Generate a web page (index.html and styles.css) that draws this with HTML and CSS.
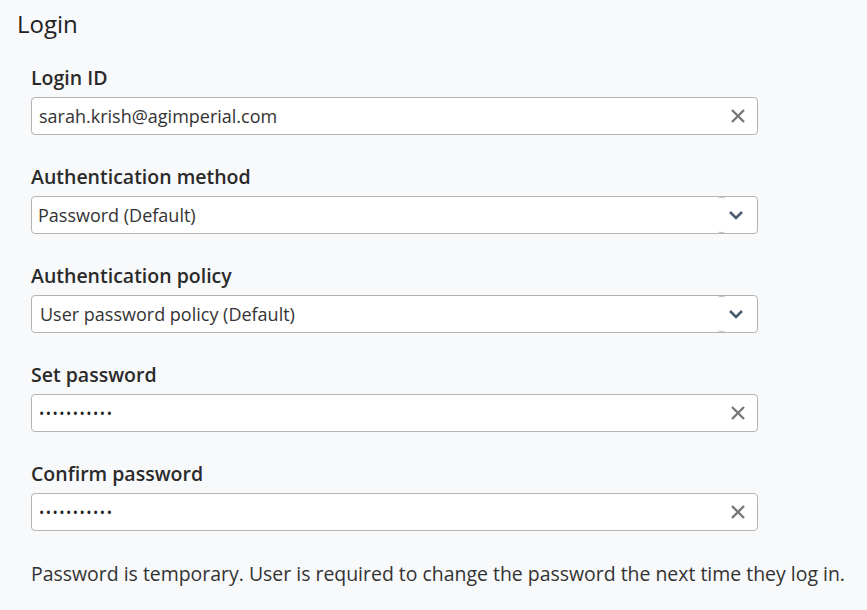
FILE: index.html
```html
<!DOCTYPE html>
<html lang="en">
<head>
    <meta charset="UTF-8">
    <meta name="viewport" content="width=device-width, initial-scale=1.0">
    <title>Login</title>
    <link rel="stylesheet" href="styles.css">
</head>
<body>
    <div class="page">
        <h1>Login</h1>

        <form class="login-form">
            <div class="field">
                <label for="login_id">Login ID</label>
                <div class="control">
                    <input type="text" id="login_id" value="sarah.krish@agimperial.com">
                    <span class="icon clear">
                        <svg width="16" height="16" viewBox="0 0 16 16"><path d="M2 2 L14 14 M14 2 L2 14" stroke="#777" stroke-width="2.4" fill="none"/></svg>
                    </span>
                </div>
            </div>

            <div class="field">
                <label for="auth_method">Authentication method</label>
                <div class="control select">
                    <span class="value" id="auth_method">Password (Default)</span>
                    <span class="divider"></span>
                    <span class="icon chevron">
                        <svg width="16" height="10" viewBox="0 0 16 10"><path d="M2 2 L8 8 L14 2" stroke="#4a5a6e" stroke-width="2.5" fill="none"/></svg>
                    </span>
                </div>
            </div>

            <div class="field">
                <label for="auth_policy">Authentication policy</label>
                <div class="control select">
                    <span class="value policy" id="auth_policy">User password policy (Default)</span>
                    <span class="divider"></span>
                    <span class="icon chevron">
                        <svg width="16" height="10" viewBox="0 0 16 10"><path d="M2 2 L8 8 L14 2" stroke="#4a5a6e" stroke-width="2.5" fill="none"/></svg>
                    </span>
                </div>
            </div>

            <div class="field">
                <label for="set_password">Set password</label>
                <div class="control">
                    <input type="password" id="set_password" value="Temporary01">
                    <span class="icon clear">
                        <svg width="16" height="16" viewBox="0 0 16 16"><path d="M2 2 L14 14 M14 2 L2 14" stroke="#777" stroke-width="2.4" fill="none"/></svg>
                    </span>
                </div>
            </div>

            <div class="field">
                <label for="confirm_password">Confirm password</label>
                <div class="control">
                    <input type="password" id="confirm_password" value="Temporary01">
                    <span class="icon clear">
                        <svg width="16" height="16" viewBox="0 0 16 16"><path d="M2 2 L14 14 M14 2 L2 14" stroke="#777" stroke-width="2.4" fill="none"/></svg>
                    </span>
                </div>
            </div>

            <p class="note">Password is temporary. User is required to change the password the next time they log in.</p>
        </form>
    </div>
</body>
</html>
```

FILE: styles.css
```css
body {
    font-family: 'Open Sans', sans-serif;
    background-color: #f8f9fb;
    color: #333;
    margin: 0;
    padding: 0;
}
.page {
    padding: 7px 0 0 17px;
}
h1 {
    font-size: 24px;
    font-weight: 400;
    line-height: 34px;
    margin: 0;
    color: #222;
}
.login-form {
    margin: 25px 0 0 14px;
    width: 727px;
}
.field {
    margin-bottom: 30px;
}
.field label {
    display: block;
    font-size: 19.5px;
    font-weight: 600;
    line-height: 24px;
    margin-bottom: 7px;
    color: #2a2a2a;
}
.control {
    display: flex;
    align-items: center;
    height: 38px;
    box-sizing: border-box;
    border: 1px solid #b4b4b4;
    border-radius: 4px;
    background-color: white;
}
.control input {
    flex: 1;
    min-width: 0;
    border: none;
    outline: none;
    background: transparent;
    font-family: inherit;
    font-size: 18px;
    color: #333;
    padding: 0 7px;
    height: 100%;
}
.control input[type="password"] {
    font-size: 14px;
    letter-spacing: 1.5px;
    color: #222;
}
.control .value {
    flex: 1;
    font-size: 18px;
    padding: 0 6px;
    color: #333;
}
.control .value.policy {
    padding-left: 8px;
}
.divider {
    align-self: stretch;
    width: 7px;
    box-sizing: border-box;
    border-top: 1px solid #c4c4c4;
    border-bottom: 1px solid #c4c4c4;
    border-radius: 2px;
}
.icon {
    display: flex;
    align-items: center;
    justify-content: center;
    width: 38px;
    height: 100%;
}
.icon.chevron {
    width: 22px;
    padding-right: 10px;
}
.note {
    font-size: 19.45px;
    line-height: 26px;
    margin: 0;
    color: #333;
    white-space: nowrap;
}
```
